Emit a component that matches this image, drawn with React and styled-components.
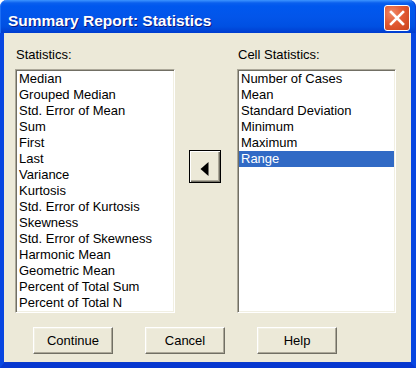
import React, { useState } from 'react';
import styled, { createGlobalStyle } from 'styled-components';

const GlobalStyle = createGlobalStyle`
    body {
        margin: 0;
        background: #ffffff;
        font-family: "Liberation Sans", Arial, sans-serif;
    }
`;

const statistics = [
    'Median',
    'Grouped Median',
    'Std. Error of Mean',
    'Sum',
    'First',
    'Last',
    'Variance',
    'Kurtosis',
    'Std. Error of Kurtosis',
    'Skewness',
    'Std. Error of Skewness',
    'Harmonic Mean',
    'Geometric Mean',
    'Percent of Total Sum',
    'Percent of Total N',
];

const cellStatistics = [
    'Number of Cases',
    'Mean',
    'Standard Deviation',
    'Minimum',
    'Maximum',
    'Range',
];

export default function App() {
    const [selected, setSelected] = useState('Range');

    return (
        <>
            <GlobalStyle />
            <Window>
                <TitleBar>
                    <Title>Summary Report: Statistics</Title>
                    <CloseButton aria-label="Close">
                        <svg width="16" height="16" viewBox="0 0 16 16">
                            <path d="M2 2 L14 14 M14 2 L2 14" stroke="#fff" strokeWidth="2.6" strokeLinecap="square" />
                        </svg>
                    </CloseButton>
                </TitleBar>
                <Body>
                    <Lists>
                        <Column $width={160}>
                            <Label>Statistics:</Label>
                            <ListBox>
                                {statistics.map((s) => (
                                    <Item key={s}>{s}</Item>
                                ))}
                            </ListBox>
                        </Column>
                        <Middle>
                            <ArrowButton aria-label="Remove">
                                <svg width="9" height="14" viewBox="0 0 9 14">
                                    <polygon points="8.5,0 8.5,14 0.5,7" fill="#000" />
                                </svg>
                            </ArrowButton>
                        </Middle>
                        <Column $width={159}>
                            <Label>Cell Statistics:</Label>
                            <ListBox>
                                {cellStatistics.map((s) => (
                                    <Item
                                        key={s}
                                        $selected={s === selected}
                                        onClick={() => setSelected(s)}
                                    >
                                        {s}
                                    </Item>
                                ))}
                            </ListBox>
                        </Column>
                    </Lists>
                    <ButtonRow>
                        <Button>Continue</Button>
                        <Button>Cancel</Button>
                        <Button>Help</Button>
                    </ButtonRow>
                </Body>
            </Window>
        </>
    );
}

const Window = styled.div`
    width: 416px;
    height: 368px;
    display: flex;
    flex-direction: column;
    box-sizing: border-box;
`;

const TitleBar = styled.div`
    height: 33px;
    flex-shrink: 0;
    display: flex;
    justify-content: space-between;
    align-items: flex-start;
    padding: 0 5px 0 8px;
    border-radius: 7px 7px 0 0;
    background: linear-gradient(
        to bottom,
        #3d95ff 0px,
        #0a5fee 3px,
        #0058ee 6px,
        #0255ea 50%,
        #0050e2 80%,
        #003ccf 100%
    );
    box-shadow: inset 1px 0 #1c6ef5, inset -1px 0 #0a3fd4;
`;

const Title = styled.div`
    margin-top: 13px;
    font-family: "Liberation Sans", Arial, sans-serif;
    font-weight: bold;
    font-size: 15.5px;
    line-height: 1;
    color: #ffffff;
    text-shadow: 1px 1px #0a1883;
    white-space: nowrap;
`;

const CloseButton = styled.button`
    margin-top: 5px;
    margin-right: 1px;
    width: 26px;
    height: 26px;
    padding: 0;
    display: flex;
    align-items: center;
    justify-content: center;
    border: 1px solid #ffffff;
    border-radius: 3px;
    background: radial-gradient(circle at 30% 30%, #f08a68 0%, #e25a33 45%, #c9411b 100%);
    cursor: pointer;
`;

const Body = styled.div`
    flex: 1;
    display: flex;
    flex-direction: column;
    background: #ece9d8;
    padding: 14px 15px 0 11px;
    border-left: 4px solid #0746e1;
    border-right: 5px solid #0746e1;
    border-bottom: 5px solid #0637d0;
    box-shadow: inset 0 -1px #0a3acb;
`;

const Lists = styled.div`
    display: flex;
`;

const Column = styled.div`
    width: ${(p) => p.$width}px;
    display: flex;
    flex-direction: column;
`;

const Middle = styled.div`
    width: 62px;
    display: flex;
    flex-direction: column;
    align-items: flex-start;
    padding: 103px 0 0 14px;
    box-sizing: border-box;
`;

const Label = styled.div`
    font-size: 13px;
    line-height: 16px;
    color: #000;
    padding-left: 1px;
    margin-bottom: 6px;
`;

const ListBox = styled.div`
    height: 244px;
    box-sizing: border-box;
    background: #ffffff;
    border: 1px solid;
    border-color: #aca899 #ffffff #ffffff #aca899;
    box-shadow: inset 1px 1px #716f64, inset -1px -1px #f1efe2;
    padding: 1px 1px 1px 1px;
    overflow: hidden;
`;

const Item = styled.div`
    height: 16px;
    line-height: 16px;
    font-size: 13px;
    padding-left: 2px;
    white-space: nowrap;
    color: ${(p) => (p.$selected ? '#ffffff' : '#000000')};
    background: ${(p) => (p.$selected ? '#316ac5' : 'transparent')};
    cursor: default;
`;

const ArrowButton = styled.button`
    width: 32px;
    height: 33px;
    padding: 0 2px 0 0;
    display: flex;
    align-items: center;
    justify-content: center;
    background: #ece9d8;
    border: 1px solid #000;
    box-shadow: inset 1px 1px #ffffff, inset -1px -1px #716f64, inset -2px -2px #aca899;
    cursor: pointer;

    svg {
        margin-top: 5px;
    }
`;

const ButtonRow = styled.div`
    display: flex;
    gap: 32px;
    margin-top: 14px;
    padding-left: 18px;
`;

const Button = styled.button`
    width: 80px;
    height: 27px;
    padding: 0;
    font-family: "Liberation Sans", Arial, sans-serif;
    font-size: 13px;
    color: #000;
    background: #ece9d8;
    border: 1px solid;
    border-color: #ffffff #716f64 #716f64 #ffffff;
    box-shadow: inset -1px -1px #aca899, inset 1px 1px #f1efe2;
    cursor: pointer;
`;
